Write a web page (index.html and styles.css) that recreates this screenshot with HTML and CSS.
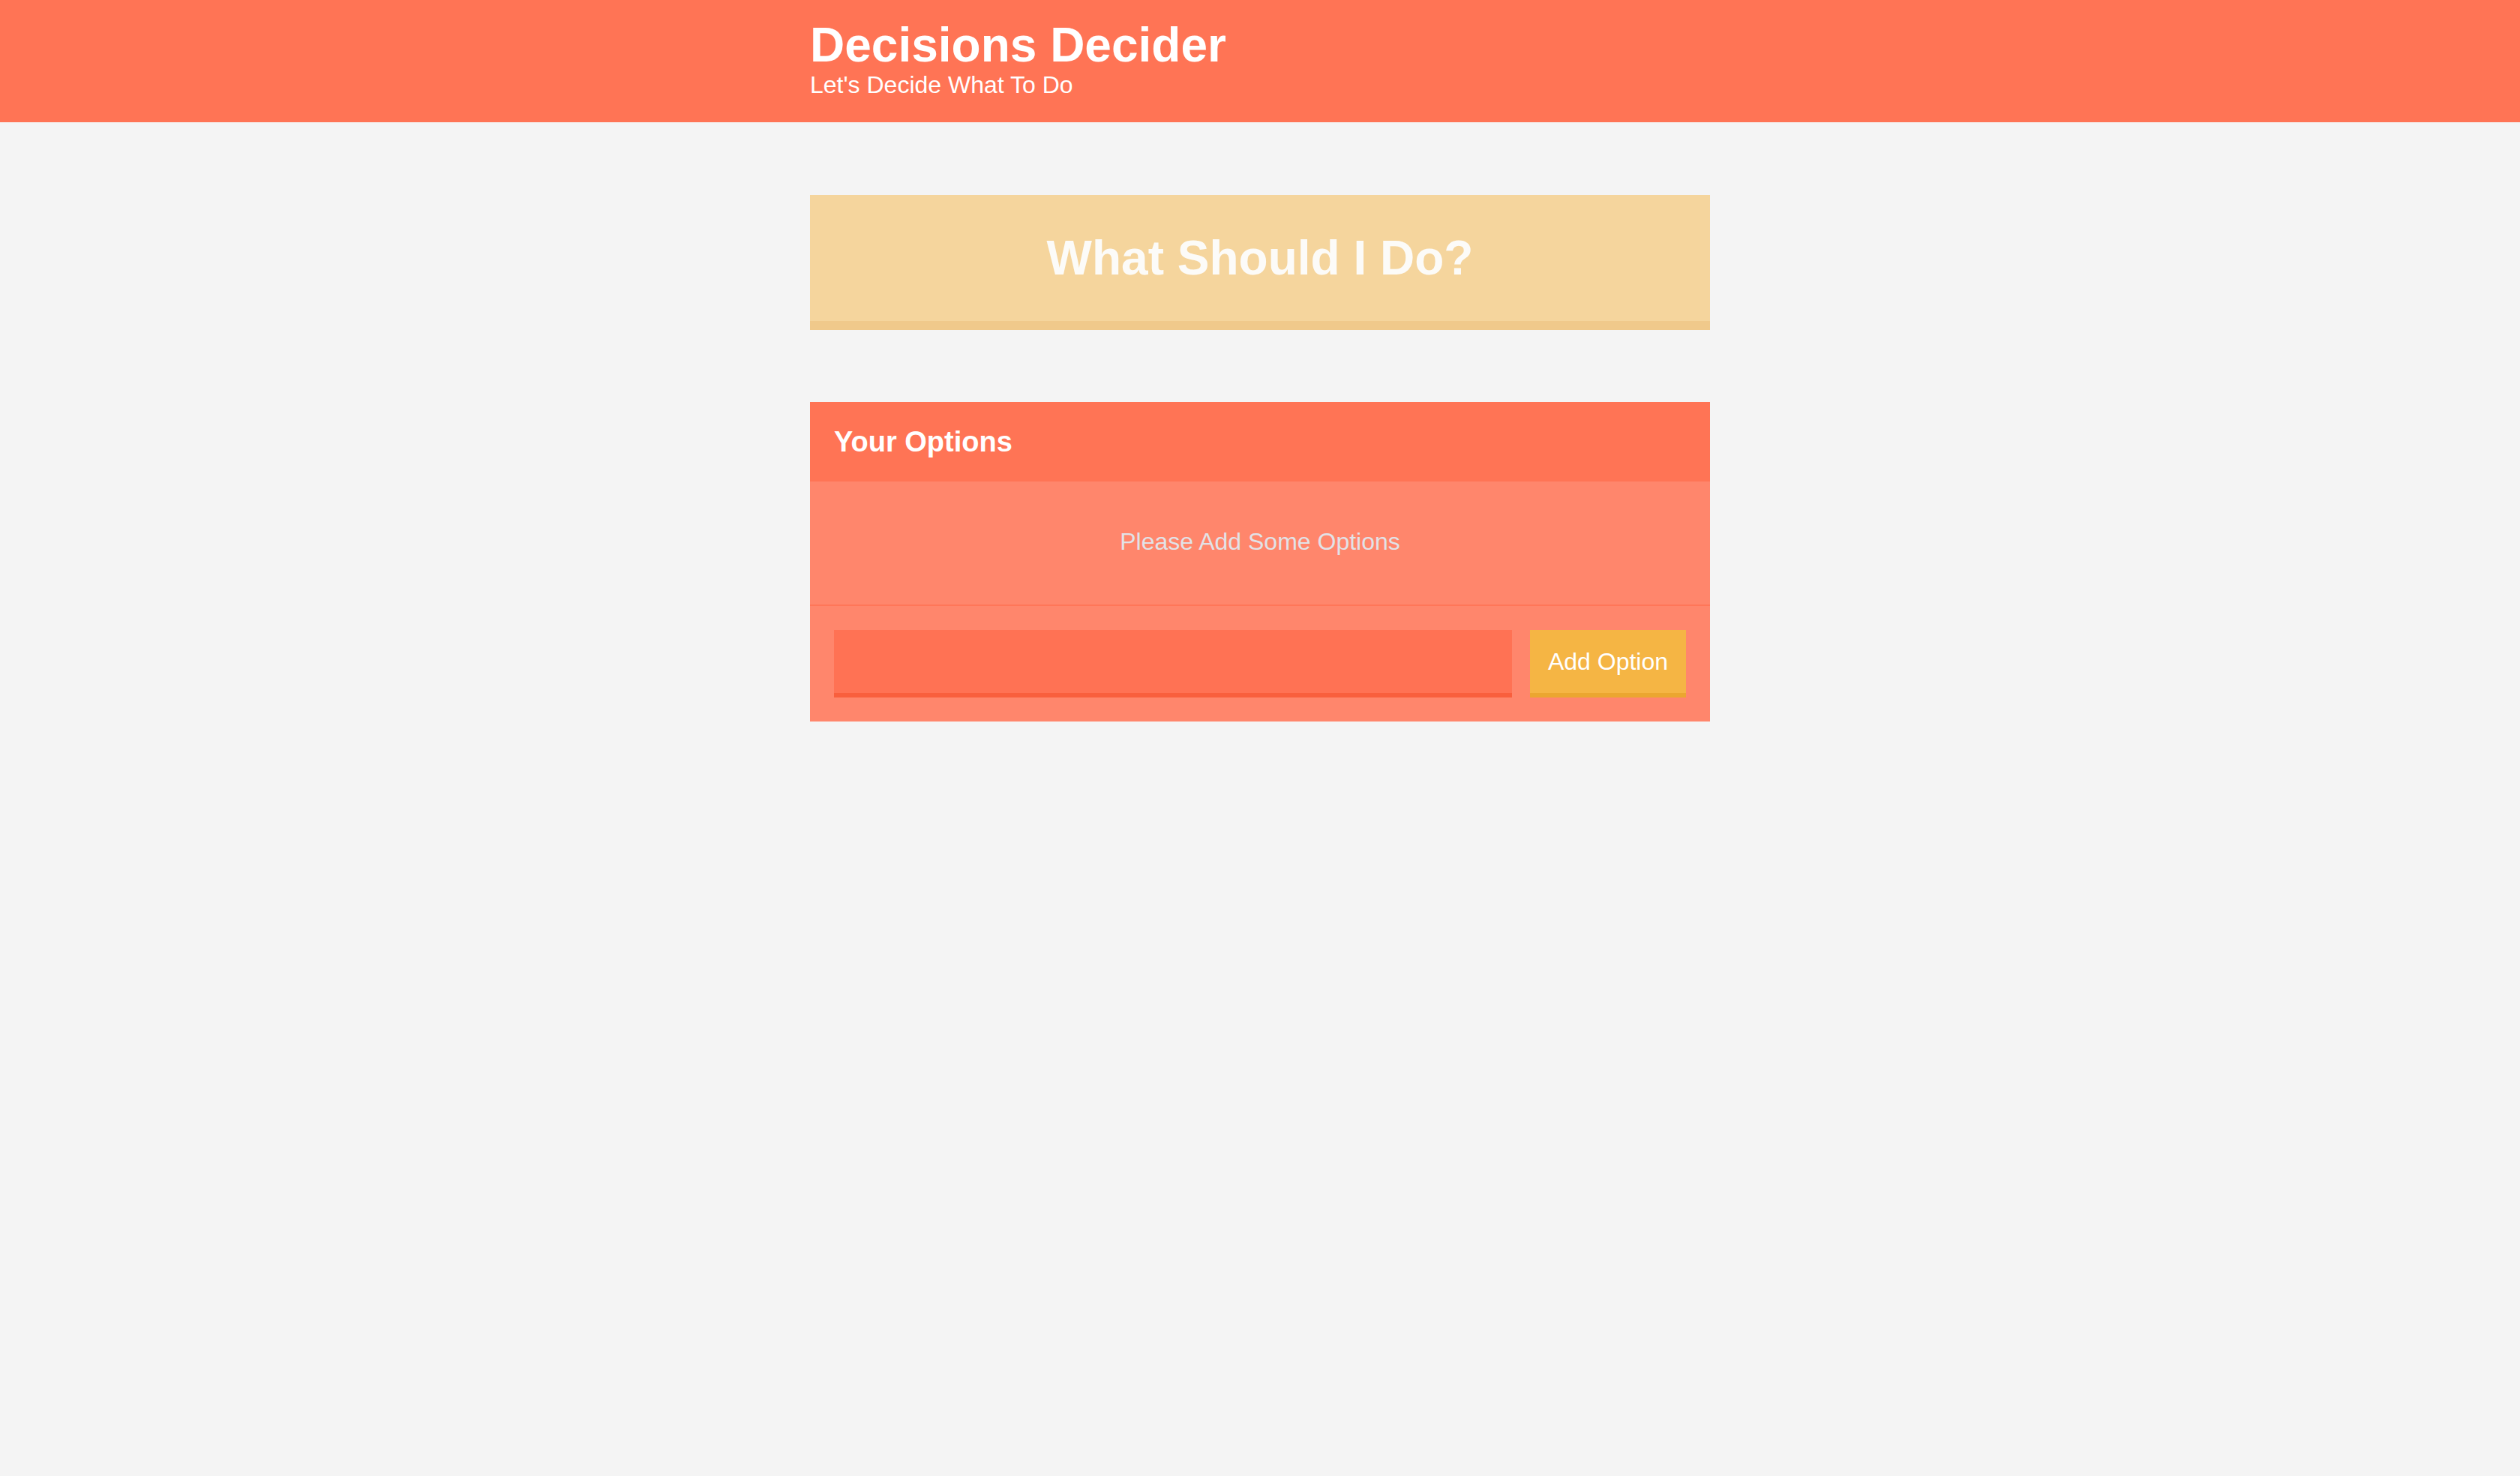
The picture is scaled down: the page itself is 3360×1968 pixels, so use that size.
FILE: index.html
```html
<!DOCTYPE html>
<html lang="en">
<head>
<meta charset="utf-8">
<title>Decisions Decider</title>
<link rel="stylesheet" href="styles.css">
</head>
<body>
  <header class="header">
    <div class="container">
      <h1 class="header__title">Decisions Decider</h1>
      <h2 class="header__subtitle">Let's Decide What To Do</h2>
    </div>
  </header>
  <main class="container">
    <button class="big-button">What Should I Do?</button>
    <section class="widget">
      <div class="widget-header">
        <h3 class="widget-header__title">Your Options</h3>
      </div>
      <p class="widget__message">Please Add Some Options</p>
      <form class="add-option">
        <input class="add-option__input" type="text" name="option">
        <button class="button" type="button">Add Option</button>
      </form>
    </section>
  </main>
</body>
</html>
```

FILE: styles.css
```css
* {
  box-sizing: border-box;
}

html, body {
  margin: 0;
  padding: 0;
}

body {
  background: #f4f4f4;
  font-family: "Liberation Sans", Arial, Helvetica, sans-serif;
  color: #ffffff;
}

.container {
  width: 1200px;
  margin: 0 auto;
}

.header {
  background: #ff7455;
  padding: 26px 0 31px;
}

.header__title {
  margin: 0;
  font-size: 64px;
  line-height: 68px;
  font-weight: bold;
  color: #ffffff;
}

.header__subtitle {
  margin: 0;
  font-size: 32px;
  line-height: 38px;
  font-weight: normal;
  color: #ffffff;
}

.big-button {
  display: block;
  width: 100%;
  margin: 97px 0 96px;
  padding: 47px 0;
  background: #f5d59d;
  border: none;
  border-bottom: 12px solid #f0c98b;
  font-family: "Liberation Sans", Arial, Helvetica, sans-serif;
  font-size: 64px;
  line-height: 74px;
  font-weight: bold;
  color: #fcfbf8;
  text-align: center;
}

.widget {
  background: #ff866c;
}

.widget-header {
  background: #ff7455;
  padding: 32px;
}

.widget-header__title {
  margin: 0;
  font-size: 38px;
  line-height: 42px;
  font-weight: bold;
  color: #ffffff;
}

.widget__message {
  margin: 0;
  padding: 60px 32px 64px;
  font-size: 32px;
  line-height: 40px;
  color: #e2e2e7;
  text-align: center;
  border-bottom: 2px solid #ff7658;
}

.add-option {
  display: flex;
  gap: 24px;
  padding: 32px;
  margin: 0;
}

.add-option__input {
  flex: 1;
  height: 90px;
  margin: 0;
  background: #ff7254;
  border: none;
  border-bottom: 6px solid #f95f3d;
  color: #ffffff;
  font-family: "Liberation Sans", Arial, Helvetica, sans-serif;
  font-size: 32px;
  padding: 0 24px;
  outline: none;
}

.button {
  flex: none;
  width: 208px;
  height: 90px;
  margin: 0;
  padding: 0;
  background: #f5b544;
  border: none;
  border-bottom: 6px solid #eba630;
  color: #ffffff;
  font-family: "Liberation Sans", Arial, Helvetica, sans-serif;
  font-size: 32px;
  line-height: 40px;
  white-space: nowrap;
  text-align: center;
}
```
